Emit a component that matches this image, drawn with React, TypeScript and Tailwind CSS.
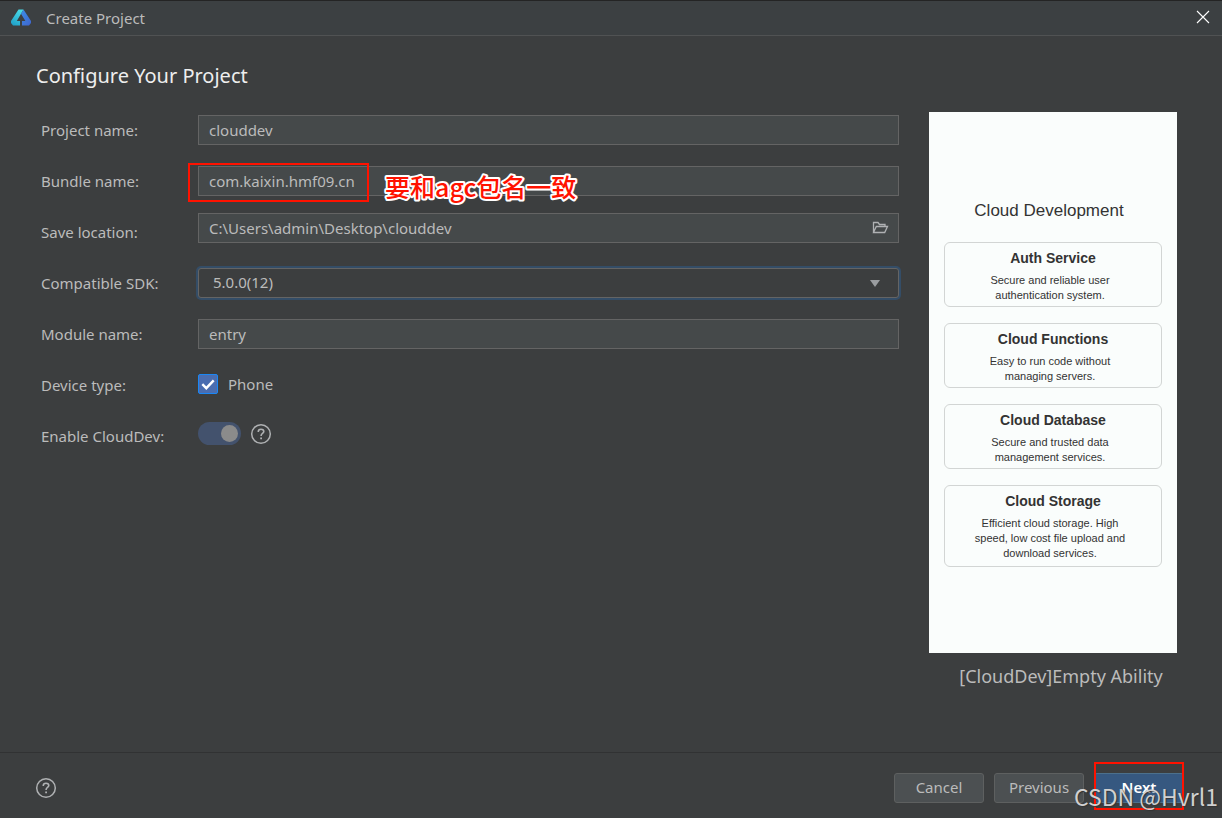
import { useState } from 'react';
import type { ReactNode } from 'react';

const services = [
  { title: 'Auth Service', lines: ['Secure and reliable user', 'authentication system.'] },
  { title: 'Cloud Functions', lines: ['Easy to run code without', 'managing servers.'] },
  { title: 'Cloud Database', lines: ['Secure and trusted data', 'management services.'] },
  { title: 'Cloud Storage', lines: ['Efficient cloud storage. High', 'speed, low cost file upload and', 'download services.'] },
];

const inputClass =
  'block h-[30px] w-full border border-[#646464] bg-[#45494a] px-[10px] text-[15px] text-[#bbbbbb] outline-none';

const buttonClass =
  'h-[30px] w-[90px] rounded-[3px] border border-[#5e6060] bg-[#4c5052] text-[15px] text-[#bbbbbb]';

function HelpIcon() {
  return (
    <svg viewBox="0 0 22 22" className="size-[22px]" fill="none" stroke="#afb1b3" aria-hidden="true">
      <circle cx="11" cy="11" r="9.3" strokeWidth="1.5" />
      <path d="M8.3 9V8.6C8.3 7.2 9.4 6.3 11 6.3s2.8.9 2.8 2.3c0 1.9-2.7 1.9-2.7 4.1v.3" strokeWidth="1.6" />
      <path d="M11.1 14.4v1.8" strokeWidth="1.8" />
    </svg>
  );
}

function Logo() {
  return (
    <svg viewBox="0 0 20 17" className="mb-[2px] h-[17px] w-5" aria-hidden="true">
      <defs>
        <linearGradient id="logoLeft" x1="0.7" y1="0" x2="0.2" y2="1">
          <stop offset="0" stopColor="#49dbe6" />
          <stop offset="1" stopColor="#20a0c8" />
        </linearGradient>
        <linearGradient id="logoRight" x1="0" y1="0" x2="0.8" y2="1">
          <stop offset="0" stopColor="#3b8fe8" />
          <stop offset="1" stopColor="#3f68cf" />
        </linearGradient>
      </defs>
      <path d="M7.5.5h5L5.8 12H9v4.5H2L0 14v-2z" fill="url(#logoLeft)" />
      <path d="M12.5.5 20 12v2l-2 2.5h-7V12h3.4L10 4.8z" fill="url(#logoRight)" />
    </svg>
  );
}

function Row({ label, htmlFor, children }: { label: string; htmlFor: string; children: ReactNode }) {
  return (
    <div className="flex h-[51px] items-center">
      <label htmlFor={htmlFor} className="w-[157px] shrink-0 text-[15px]">
        {label}
      </label>
      <div className="min-w-0 flex-1 pb-[2px]">{children}</div>
    </div>
  );
}

function Preview() {
  return (
    <aside className="w-[248px] shrink-0">
      <div className="bg-[#fafdfc] px-[15px] pt-[87px] pb-[86px] text-center font-['Liberation_Sans',Arial,sans-serif] text-[#333333]">
        <h2 className="pr-2 text-[17px] leading-6">Cloud Development</h2>
        <div className="mt-[19px] space-y-4">
          {services.map((service) => (
            <section key={service.title} className="rounded-md border border-[#d2d5d4] pt-[5px] pb-[3px] last:pb-[5px]">
              <h3 className="text-[14px] leading-5 font-bold">{service.title}</h3>
              <p className="mt-[5px] pr-[6px] text-[11px] leading-[15px]">
                {service.lines.map((line) => (
                  <span key={line} className="block">{line}</span>
                ))}
              </p>
            </section>
          ))}
        </div>
      </div>
      <p className="mt-[11px] pl-4 text-center text-[18px] leading-6 whitespace-nowrap">[CloudDev]Empty Ability</p>
    </aside>
  );
}

export default function App() {
  const [projectName, setProjectName] = useState('clouddev');
  const [bundleName, setBundleName] = useState('com.kaixin.hmf09.cn');
  const [location, setLocation] = useState('C:\\Users\\admin\\Desktop\\clouddev');
  const [moduleName, setModuleName] = useState('entry');
  const [phone, setPhone] = useState(true);
  const [cloudDev, setCloudDev] = useState(true);

  return (
    <div className="relative flex min-h-screen flex-col bg-[#3c3e3f] font-['Noto_Sans','Noto_Sans_CJK_SC',sans-serif] text-[#bbbbbb]">
      <header className="flex h-9 items-center border-t border-b border-t-[#242424] border-b-[#505253] bg-[#3c4042] pr-3 pl-[11px]">
        <Logo />
        <span className="ml-[15px] text-[15px]">Create Project</span>
        <button type="button" aria-label="Close" className="mb-[2px] ml-auto text-white">
          <svg viewBox="0 0 14 14" className="size-[14px]" stroke="currentColor" strokeWidth="1.1" aria-hidden="true">
            <path d="M1 1l12 12M13 1L1 13" />
          </svg>
        </button>
      </header>

      <main className="flex flex-1 gap-[30px] pr-[45px] pl-9">
        <form className="min-w-0 flex-1" onSubmit={(e) => e.preventDefault()}>
          <h1 className="pt-[26px] pb-[15px] text-[20px] leading-7 text-[#eeeeee]">Configure Your Project</h1>
          <div className="pl-[5px]">
            <Row label="Project name:" htmlFor="project">
              <input id="project" className={inputClass} value={projectName} onChange={(e) => setProjectName(e.target.value)} />
            </Row>
            <Row label="Bundle name:" htmlFor="bundle">
              <div className="relative">
                <input id="bundle" className={inputClass} value={bundleName} onChange={(e) => setBundleName(e.target.value)} />
                <div className="pointer-events-none absolute -top-[3px] -left-[10px] h-[39px] w-[181px] border-2 border-[#ff1200]" />
                <svg className="pointer-events-none absolute top-0 left-[184px] h-11 w-[210px]" aria-hidden="true">
                  <text
                    x="3"
                    y="31"
                    fontSize="25"
                    fontWeight="500"
                    fontFamily="'Noto Sans CJK SC', sans-serif"
                    fill="#ff1200"
                    stroke="#ffffff"
                    strokeWidth="4"
                    strokeLinejoin="round"
                    paintOrder="stroke"
                  >
                    要和agc包名一致
                  </text>
                </svg>
              </div>
            </Row>
            <Row label="Save location:" htmlFor="location">
              <div className="relative mb-2">
                <input id="location" className={inputClass} value={location} onChange={(e) => setLocation(e.target.value)} />
                <button type="button" aria-label="Browse" className="absolute top-2 right-[10px]">
                  <svg viewBox="0 0 17 14" className="h-[14px] w-[17px]" fill="none" stroke="#afb1b3" strokeWidth="1.3" aria-hidden="true">
                    <path d="M1.5 11.5V1.5H6l1.5 2h5.5v2M1.5 11.5h11.2l2.8-6H4.3z" />
                  </svg>
                </button>
              </div>
            </Row>
            <Row label="Compatible SDK:" htmlFor="sdk">
              <div className="relative">
                <select
                  id="sdk"
                  className="block h-[30px] w-full appearance-none rounded-[3px] border border-[#646464] bg-[#3c3e3f] px-[14px] text-[15px] text-[#bbbbbb] ring-2 ring-[#344d67] outline-none"
                >
                  <option>5.0.0(12)</option>
                </select>
                <svg viewBox="0 0 10 7" className="pointer-events-none absolute top-3 right-[19px] h-[7px] w-[10px]" fill="#9a9da0" aria-hidden="true">
                  <path d="M0 0h10L5 7z" />
                </svg>
              </div>
            </Row>
            <Row label="Module name:" htmlFor="module">
              <input id="module" className={inputClass} value={moduleName} onChange={(e) => setModuleName(e.target.value)} />
            </Row>
            <Row label="Device type:" htmlFor="phone">
              <div className="mb-[2px] flex items-center">
                <span className="relative size-5">
                  <input
                    id="phone"
                    type="checkbox"
                    checked={phone}
                    onChange={(e) => setPhone(e.target.checked)}
                    className="block size-5 appearance-none rounded-[2px] border border-[#1a87f5] checked:bg-[#4a6db0]"
                  />
                  {phone && (
                    <svg viewBox="0 0 20 20" className="pointer-events-none absolute inset-0" fill="none" stroke="white" strokeWidth="2.4" aria-hidden="true">
                      <path d="M4.3 10.2l4 4 7.4-7.8" />
                    </svg>
                  )}
                </span>
                <label htmlFor="phone" className="ml-[10px] pt-[2px] text-[15px]">Phone</label>
              </div>
            </Row>
            <Row label="Enable CloudDev:" htmlFor="clouddev">
              <div className="mb-1 flex items-center gap-[9px]">
                <span className="relative h-[23px] w-[43px]">
                  <input
                    id="clouddev"
                    type="checkbox"
                    role="switch"
                    checked={cloudDev}
                    onChange={(e) => setCloudDev(e.target.checked)}
                    className="peer block h-[23px] w-[43px] appearance-none rounded-full bg-[#5a5d5f] checked:bg-[#43526d]"
                  />
                  <span className="pointer-events-none absolute top-[3px] left-[3px] size-[17px] rounded-full bg-[#8b8b8b] peer-checked:left-[23px]" />
                </span>
                <button type="button" aria-label="About CloudDev">
                  <HelpIcon />
                </button>
              </div>
            </Row>
          </div>
        </form>
        <div className="pt-[76px]">
          <Preview />
        </div>
      </main>

      <footer className="flex h-[66px] items-center gap-[10px] border-t border-[#313233] pt-1 pr-[38px] pl-[35px]">
        <button type="button" aria-label="Help" className="mr-auto">
          <HelpIcon />
        </button>
        <button type="button" className={buttonClass}>Cancel</button>
        <button type="button" className={buttonClass}>Previous</button>
        <div className="relative">
          <button
            type="button"
            className="block h-[30px] w-[90px] rounded-[3px] border border-[#4c708c] bg-[#365880] text-[15px] font-semibold text-white"
          >
            Next
          </button>
          <div className="pointer-events-none absolute -top-[11px] left-0 h-12 w-[90px] border-2 border-[#ff1200]" />
        </div>
      </footer>

      <span className="pointer-events-none absolute right-1 bottom-[6px] font-['Noto_Sans_CJK_SC',sans-serif] text-[23px] leading-8 text-[#d0d0d0] text-shadow-[1px_1px_1px_#333333]">
        CSDN @Hvrl1
      </span>
    </div>
  );
}
